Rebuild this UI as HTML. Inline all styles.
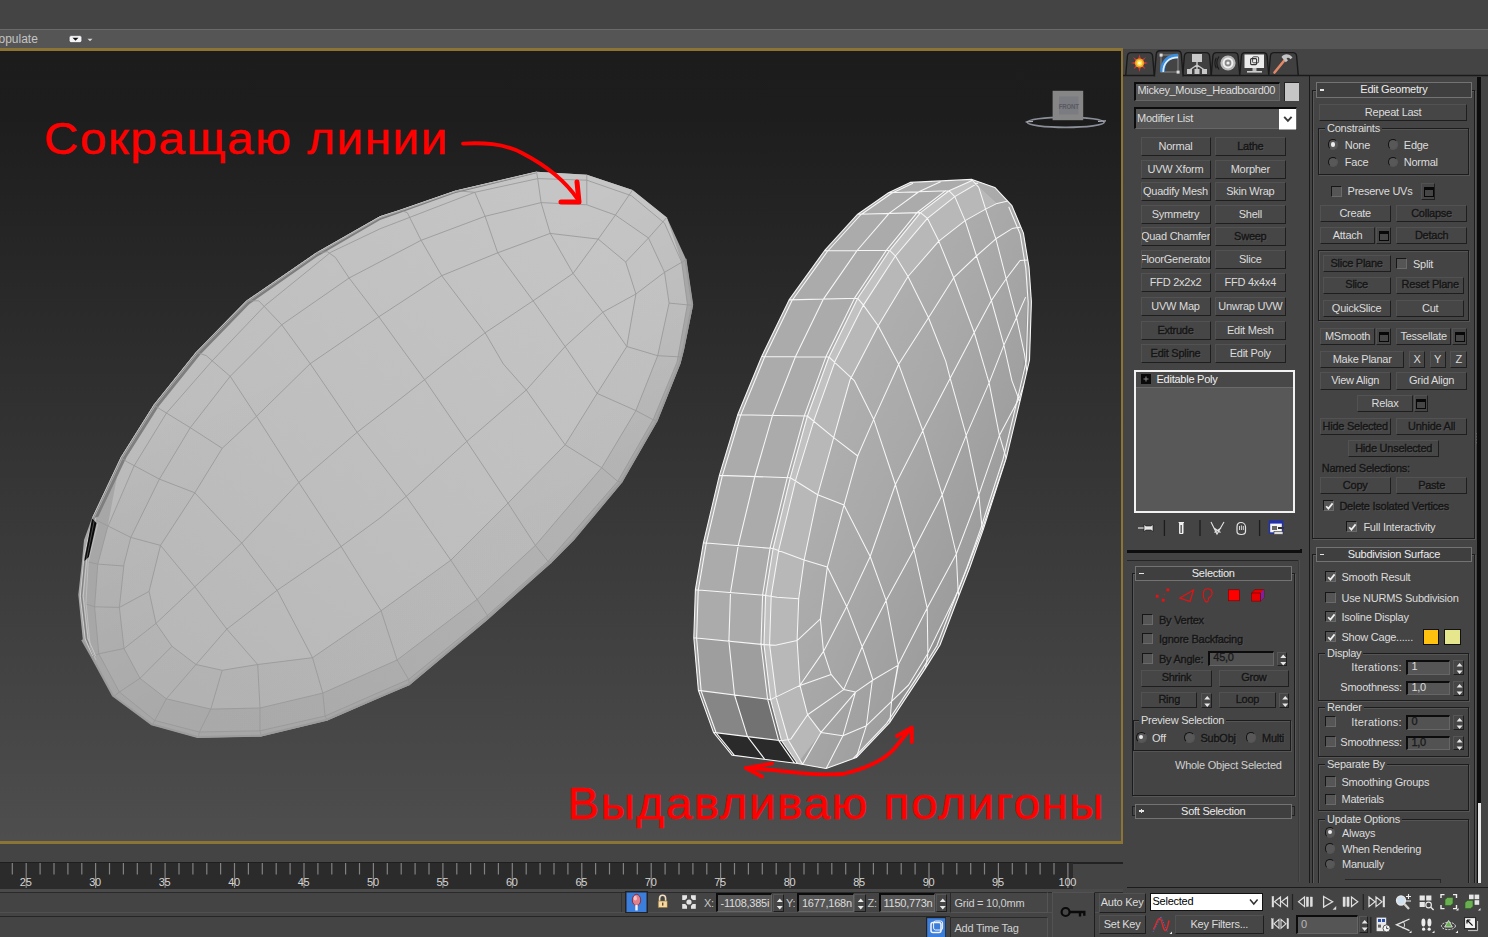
<!DOCTYPE html>
<html><head><meta charset="utf-8"><title>3ds Max</title><style>
html,body{margin:0;padding:0;background:#444;}
body{width:1488px;height:937px;position:relative;overflow:hidden;font-family:"Liberation Sans",sans-serif;font-size:11px;letter-spacing:-0.25px;}
#r{position:absolute;left:0;top:0;width:1488px;height:937px;overflow:hidden;background:#444;}
#r div,#r span,#r svg{position:absolute;box-sizing:border-box;}
#r svg{overflow:visible;}
.t{white-space:nowrap;line-height:14px;height:14px;}
.b{background:#464646;border-top:1px solid #525252;border-left:1px solid #525252;border-bottom:1.4px solid #1e1e1e;border-right:1.4px solid #1e1e1e;text-align:center;white-space:nowrap;}
.c{background:#555;border-top:1.5px solid #161616;border-left:1.5px solid #161616;border-right:1px solid #6a6a6a;border-bottom:1px solid #6a6a6a;}
.r{width:10.4px;height:10.4px;border-radius:6px;background:#585858;border:1.5px solid #121212;border-right-color:#555;border-bottom-color:#555;}
.g{border:1.4px solid #1c1c1c;box-shadow:1px 1px 0 #555, inset 1px 1px 0 #555;}
.f{background:#555;border-top:2px solid #0c0c0c;border-left:2px solid #0c0c0c;border-right:1px solid #666;border-bottom:1px solid #666;color:#dcdcdc;font-size:11px;padding-left:3px;white-space:nowrap;overflow:hidden;}
.sp{background:#464646;border-top:1px solid #565656;border-left:1px solid #565656;border-right:1.3px solid #1e1e1e;border-bottom:1.3px solid #1e1e1e;}
.h{background:#3f3f3f;border:1px solid #737373;color:#ececec;text-align:center;font-size:11px;white-space:nowrap;}
.rb{border:1.4px solid #1c1c1c;box-shadow:1px 1px 0 #585858, inset 1px 1px 0 #585858;}
.pn{border-top:1px solid #2a2a2a;border-left:1px solid #2a2a2a;border-right:1px solid #555;border-bottom:1px solid #555;background:#464646}
.tab{background:#484848;border:1.5px solid #1a1a1a;border-radius:5px 5px 0 0;transform:skewX(4deg);}
</style></head>
<body><div id="r">
<div style="left:0px;top:0px;width:1488px;height:29px;background:#444"></div>
<div style="left:0px;top:29px;width:1488px;height:1px;background:#6a6a6a"></div>
<div style="left:0px;top:30px;width:1488px;height:19px;background:#555"></div>
<span class="t" style="left:-1.5px;top:32.2px;color:#c4c4c4;font-size:12px;letter-spacing:0;">opulate</span>
<svg style="left:66px;top:32px" width="30" height="14" viewBox="0 0 30 14"><rect x="3.2" y="3.6" width="12.6" height="7" rx="2" fill="#f4f4f4" stroke="#3a3a4a" stroke-width="0.6"/><path d="M6.5 5.8 L12.5 5.8 L9.5 8.8 Z" fill="#111"/><path d="M21.5 6.8 L26.5 6.8 L24 9.3 Z" fill="#d8d8d8"/></svg>
<div style="left:0px;top:48px;width:1123px;height:796px;background:#8c7534"></div>
<div style="left:0px;top:50.6px;width:1121px;height:790.7px;background:linear-gradient(#1c1c1c 0%,#1d1d1d 8%,#4e4e4e 100%)"></div>
<div style="left:0px;top:862px;width:1123px;height:2px;background:#222"></div>
<div style="left:0px;top:863px;width:1073px;height:26px;background:#2b2b2b"></div>
<div style="left:0px;top:862px;width:1073px;height:1px;background:#1e1e1e"></div>
<div style="left:0px;top:889px;width:1123px;height:3px;background:#4a4a4a"></div>
<div style="left:0px;top:892px;width:1123px;height:1px;background:#2a2a2a"></div>
<svg style="left:0;top:862px" width="1123" height="28"><rect x="11.7" y="1" width="1.2" height="11.5" fill="#828282"/><rect x="25.6" y="1" width="1.2" height="25" fill="#828282"/><rect x="39.5" y="1" width="1.2" height="11.5" fill="#828282"/><rect x="53.4" y="1" width="1.2" height="11.5" fill="#828282"/><rect x="67.3" y="1" width="1.2" height="11.5" fill="#828282"/><rect x="81.2" y="1" width="1.2" height="11.5" fill="#828282"/><rect x="95.0" y="1" width="1.2" height="25" fill="#828282"/><rect x="108.9" y="1" width="1.2" height="11.5" fill="#828282"/><rect x="122.8" y="1" width="1.2" height="11.5" fill="#828282"/><rect x="136.7" y="1" width="1.2" height="11.5" fill="#828282"/><rect x="150.6" y="1" width="1.2" height="11.5" fill="#828282"/><rect x="164.5" y="1" width="1.2" height="25" fill="#828282"/><rect x="178.4" y="1" width="1.2" height="11.5" fill="#828282"/><rect x="192.3" y="1" width="1.2" height="11.5" fill="#828282"/><rect x="206.2" y="1" width="1.2" height="11.5" fill="#828282"/><rect x="220.0" y="1" width="1.2" height="11.5" fill="#828282"/><rect x="233.9" y="1" width="1.2" height="25" fill="#828282"/><rect x="247.8" y="1" width="1.2" height="11.5" fill="#828282"/><rect x="261.7" y="1" width="1.2" height="11.5" fill="#828282"/><rect x="275.6" y="1" width="1.2" height="11.5" fill="#828282"/><rect x="289.5" y="1" width="1.2" height="11.5" fill="#828282"/><rect x="303.4" y="1" width="1.2" height="25" fill="#828282"/><rect x="317.3" y="1" width="1.2" height="11.5" fill="#828282"/><rect x="331.2" y="1" width="1.2" height="11.5" fill="#828282"/><rect x="345.0" y="1" width="1.2" height="11.5" fill="#828282"/><rect x="358.9" y="1" width="1.2" height="11.5" fill="#828282"/><rect x="372.8" y="1" width="1.2" height="25" fill="#828282"/><rect x="386.7" y="1" width="1.2" height="11.5" fill="#828282"/><rect x="400.6" y="1" width="1.2" height="11.5" fill="#828282"/><rect x="414.5" y="1" width="1.2" height="11.5" fill="#828282"/><rect x="428.4" y="1" width="1.2" height="11.5" fill="#828282"/><rect x="442.3" y="1" width="1.2" height="25" fill="#828282"/><rect x="456.2" y="1" width="1.2" height="11.5" fill="#828282"/><rect x="470.0" y="1" width="1.2" height="11.5" fill="#828282"/><rect x="483.9" y="1" width="1.2" height="11.5" fill="#828282"/><rect x="497.8" y="1" width="1.2" height="11.5" fill="#828282"/><rect x="511.7" y="1" width="1.2" height="25" fill="#828282"/><rect x="525.6" y="1" width="1.2" height="11.5" fill="#828282"/><rect x="539.5" y="1" width="1.2" height="11.5" fill="#828282"/><rect x="553.4" y="1" width="1.2" height="11.5" fill="#828282"/><rect x="567.3" y="1" width="1.2" height="11.5" fill="#828282"/><rect x="581.2" y="1" width="1.2" height="25" fill="#828282"/><rect x="595.0" y="1" width="1.2" height="11.5" fill="#828282"/><rect x="608.9" y="1" width="1.2" height="11.5" fill="#828282"/><rect x="622.8" y="1" width="1.2" height="11.5" fill="#828282"/><rect x="636.7" y="1" width="1.2" height="11.5" fill="#828282"/><rect x="650.6" y="1" width="1.2" height="25" fill="#828282"/><rect x="664.5" y="1" width="1.2" height="11.5" fill="#828282"/><rect x="678.4" y="1" width="1.2" height="11.5" fill="#828282"/><rect x="692.3" y="1" width="1.2" height="11.5" fill="#828282"/><rect x="706.2" y="1" width="1.2" height="11.5" fill="#828282"/><rect x="720.0" y="1" width="1.2" height="25" fill="#828282"/><rect x="733.9" y="1" width="1.2" height="11.5" fill="#828282"/><rect x="747.8" y="1" width="1.2" height="11.5" fill="#828282"/><rect x="761.7" y="1" width="1.2" height="11.5" fill="#828282"/><rect x="775.6" y="1" width="1.2" height="11.5" fill="#828282"/><rect x="789.5" y="1" width="1.2" height="25" fill="#828282"/><rect x="803.4" y="1" width="1.2" height="11.5" fill="#828282"/><rect x="817.3" y="1" width="1.2" height="11.5" fill="#828282"/><rect x="831.2" y="1" width="1.2" height="11.5" fill="#828282"/><rect x="845.1" y="1" width="1.2" height="11.5" fill="#828282"/><rect x="858.9" y="1" width="1.2" height="25" fill="#828282"/><rect x="872.8" y="1" width="1.2" height="11.5" fill="#828282"/><rect x="886.7" y="1" width="1.2" height="11.5" fill="#828282"/><rect x="900.6" y="1" width="1.2" height="11.5" fill="#828282"/><rect x="914.5" y="1" width="1.2" height="11.5" fill="#828282"/><rect x="928.4" y="1" width="1.2" height="25" fill="#828282"/><rect x="942.3" y="1" width="1.2" height="11.5" fill="#828282"/><rect x="956.2" y="1" width="1.2" height="11.5" fill="#828282"/><rect x="970.1" y="1" width="1.2" height="11.5" fill="#828282"/><rect x="983.9" y="1" width="1.2" height="11.5" fill="#828282"/><rect x="997.8" y="1" width="1.2" height="25" fill="#828282"/><rect x="1011.7" y="1" width="1.2" height="11.5" fill="#828282"/><rect x="1025.6" y="1" width="1.2" height="11.5" fill="#828282"/><rect x="1039.5" y="1" width="1.2" height="11.5" fill="#828282"/><rect x="1053.4" y="1" width="1.2" height="11.5" fill="#828282"/><rect x="1067.3" y="1" width="1.2" height="25" fill="#828282"/></svg>
<span class="t" style="left:10.7px;top:874.5px;width:30px;text-align:center;color:#d4d4d4;font-size:11px">25</span>
<span class="t" style="left:80.1px;top:874.5px;width:30px;text-align:center;color:#d4d4d4;font-size:11px">30</span>
<span class="t" style="left:149.6px;top:874.5px;width:30px;text-align:center;color:#d4d4d4;font-size:11px">35</span>
<span class="t" style="left:219.0px;top:874.5px;width:30px;text-align:center;color:#d4d4d4;font-size:11px">40</span>
<span class="t" style="left:288.5px;top:874.5px;width:30px;text-align:center;color:#d4d4d4;font-size:11px">45</span>
<span class="t" style="left:357.9px;top:874.5px;width:30px;text-align:center;color:#d4d4d4;font-size:11px">50</span>
<span class="t" style="left:427.4px;top:874.5px;width:30px;text-align:center;color:#d4d4d4;font-size:11px">55</span>
<span class="t" style="left:496.8px;top:874.5px;width:30px;text-align:center;color:#d4d4d4;font-size:11px">60</span>
<span class="t" style="left:566.3px;top:874.5px;width:30px;text-align:center;color:#d4d4d4;font-size:11px">65</span>
<span class="t" style="left:635.7px;top:874.5px;width:30px;text-align:center;color:#d4d4d4;font-size:11px">70</span>
<span class="t" style="left:705.1px;top:874.5px;width:30px;text-align:center;color:#d4d4d4;font-size:11px">75</span>
<span class="t" style="left:774.6px;top:874.5px;width:30px;text-align:center;color:#d4d4d4;font-size:11px">80</span>
<span class="t" style="left:844.0px;top:874.5px;width:30px;text-align:center;color:#d4d4d4;font-size:11px">85</span>
<span class="t" style="left:913.5px;top:874.5px;width:30px;text-align:center;color:#d4d4d4;font-size:11px">90</span>
<span class="t" style="left:982.9px;top:874.5px;width:30px;text-align:center;color:#d4d4d4;font-size:11px">95</span>
<span class="t" style="left:1052.4px;top:874.5px;width:30px;text-align:center;color:#d4d4d4;font-size:11px">100</span>
<div style="left:0px;top:912px;width:1123px;height:1px;background:#505050"></div>
<div style="left:0px;top:916px;width:950px;height:1px;background:#262626"></div>
<div style="left:621px;top:893px;width:1px;height:19px;background:#333"></div>
<svg style="left:625px;top:891px" width="23" height="22" viewBox="0 0 23 22"><rect x="0" y="0" width="23" height="22" fill="#222"/><rect x="1.5" y="1.5" width="20" height="19.5" fill="#3c7edb"/><ellipse cx="11.5" cy="9" rx="4.2" ry="5.6" fill="#e0808c" stroke="#7a2030" stroke-width="0.8"/><ellipse cx="10.3" cy="7.2" rx="1.6" ry="2.4" fill="#f6c0c8"/><rect x="10.3" y="14" width="2.4" height="5.5" fill="#f4f4f4"/></svg>
<svg style="left:655px;top:893px" width="16" height="18" viewBox="0 0 16 18"><path d="M4.6 8 V5.2 a3 3 0 0 1 6 0 V8" fill="none" stroke="#f0e0c0" stroke-width="1.6"/><rect x="3.2" y="8" width="9" height="6.6" fill="#f4d9a4" stroke="#8a6a30" stroke-width="0.6"/><rect x="7" y="9.6" width="1.4" height="3" fill="#6a4a20"/></svg>
<svg style="left:681px;top:894px" width="16" height="16" viewBox="0 0 16 16"><rect x="1.2" y="1.2" width="13.6" height="13.6" fill="#e4e4e4"/><path d="M6 1 H10 V6 H15 V10 H10 V15 H6 V10 H1 V6 H6 Z" fill="#4a4a4a"/><circle cx="8" cy="8" r="4.2" fill="#4a4a4a"/><circle cx="8" cy="8" r="2.6" fill="#e4e4e4"/></svg>
<span class="t" style="left:704px;top:896.0px;color:#c8c8c8;font-size:11px;">X:</span>
<div class="f" style="left:715.5px;top:892.5px;width:56.5px;height:19.5px;line-height:16.9px;color:#dcdcdc;background:#555;">-1108,385i</div>
<div class="sp" style="left:772.5px;top:893.5px;width:11.5px;height:18.0px;"><svg width="11.5" height="18.0" style="position:absolute;left:0;top:0"><path d="M2.75 7.0 L5.75 3.5 L8.75 7.0 Z M2.75 11.0 L5.75 14.5 L8.75 11.0 Z" fill="#e6e6e6"/></svg></div>
<span class="t" style="left:786px;top:896.0px;color:#c8c8c8;font-size:11px;">Y:</span>
<div class="f" style="left:797px;top:892.5px;width:56.5px;height:19.5px;line-height:16.9px;color:#dcdcdc;background:#555;">1677,168n</div>
<div class="sp" style="left:854px;top:893.5px;width:11.5px;height:18.0px;"><svg width="11.5" height="18.0" style="position:absolute;left:0;top:0"><path d="M2.75 7.0 L5.75 3.5 L8.75 7.0 Z M2.75 11.0 L5.75 14.5 L8.75 11.0 Z" fill="#e6e6e6"/></svg></div>
<span class="t" style="left:867.5px;top:896.0px;color:#c8c8c8;font-size:11px;">Z:</span>
<div class="f" style="left:878.5px;top:892.5px;width:56.5px;height:19.5px;line-height:16.9px;color:#dcdcdc;background:#555;">1150,773n</div>
<div class="sp" style="left:935.5px;top:893.5px;width:11.5px;height:18.0px;"><svg width="11.5" height="18.0" style="position:absolute;left:0;top:0"><path d="M2.75 7.0 L5.75 3.5 L8.75 7.0 Z M2.75 11.0 L5.75 14.5 L8.75 11.0 Z" fill="#e6e6e6"/></svg></div>
<div class="pn" style="left:950px;top:892px;width:97.5px;height:21px;"></div>
<span class="t" style="left:954.5px;top:896.0px;color:#d0d0d0;font-size:11px;">Grid = 10,0mm</span>
<div class="pn" style="left:950px;top:916.5px;width:97.5px;height:21px;"></div>
<span class="t" style="left:954.5px;top:920.5px;color:#d0d0d0;font-size:11px;">Add Time Tag</span>
<svg style="left:926px;top:917px" width="20" height="20" viewBox="0 0 20 20"><rect x="0" y="0" width="20" height="20" fill="#222"/><rect x="1.2" y="1.2" width="18" height="18.8" fill="#3c7edb"/><rect x="5" y="5.6" width="10" height="10" rx="2" fill="none" stroke="#f4f4f4" stroke-width="1.5"/><rect x="7.6" y="4" width="9" height="9" rx="2" fill="none" stroke="#f4f4f4" stroke-width="1"/></svg>
<div class="b" style="left:1052px;top:891.5px;width:43px;height:46px;"></div>
<svg style="left:1058px;top:904px" width="30" height="16" viewBox="0 0 30 16"><circle cx="7.6" cy="8" r="4" fill="none" stroke="#0a0a0a" stroke-width="2.2"/><path d="M11.6 8 H27.5 M22 8 V12.4 M26.3 8 V11.8" stroke="#0a0a0a" stroke-width="2.4" fill="none"/></svg>
<svg style="left:0;top:50px" width="1121" height="792" viewBox="0 50 1121 792"><defs><linearGradient id="lg1" gradientUnits="userSpaceOnUse" x1="560" y1="200" x2="200" y2="700"><stop offset="0" stop-color="#c5c5c5"/><stop offset="0.6" stop-color="#bebebe"/><stop offset="1" stop-color="#b7b7b7"/></linearGradient><linearGradient id="rg1" gradientUnits="userSpaceOnUse" x1="800" y1="400" x2="1030" y2="500"><stop offset="0" stop-color="#b2b2b2"/><stop offset="0.45" stop-color="#a9a9a9"/><stop offset="1" stop-color="#9a9a9a"/></linearGradient><linearGradient id="lz" gradientUnits="userSpaceOnUse" x1="330" y1="330" x2="450" y2="560"><stop offset="0" stop-color="#000" stop-opacity="0"/><stop offset="1" stop-color="#000" stop-opacity="0.075"/></linearGradient></defs><path d="M536.5 171.7 L586.8 174.7 L632.5 190.0 L666.8 217.4 L686.2 259.7 L693.0 305.4 L684.0 350.0 L680.5 363.7 L657.7 420.8 L622.2 482.5 L574.2 540.0 L551.4 562.9 L487.4 620.0 L409.7 685.1 L380.0 697.7 L327.4 720.5 L261.1 736.5 L198.3 737.7 L152.5 725.1 L113.7 696.5 L92.0 656.5 L82.9 640.5 L78.3 594.8 L81.7 564.0 L84.0 540.0 L92.0 518.0 L120.6 457.4 L153.7 404.8 L196.0 352.0 L246.2 300.8 L316.0 252.8 L380.0 216.3 L400.0 209.9 L455.4 190.7 Z" fill="#a7a7a7"/><path d="M120.6 457.4 L153.7 404.8 L196.0 352.0 L246.2 300.8 L316.0 252.8 L380.0 216.3 L400.0 209.9 L455.4 190.7 L536.5 171.7 L586.8 174.7 L632.5 190.0 L666.8 217.4 L681.6 262.0 L687.4 304.3 L677.1 362.0 L653.1 419.7 L617.7 481.4 L548.0 561.4 L487.4 615.4 L408.6 679.4 L325.1 716.0 L260.0 730.8 L199.4 732.0 L154.8 720.5 L119.4 692.0 L98.8 653.8 L94.6 606.8 L97.8 564.1 L107.4 527.8 Z" fill="url(#lg1)"/><path d="M97.8 564.1 L107.4 527.8 L134.0 466.0 L166.5 413.0 L212.0 361.0 L264.9 305.6 L330.5 252.4 L380.0 228.8 L474.8 192.3 L537.7 178.6 L586.8 180.2 L631.4 195.7 L664.5 223.1 L681.6 262.0 L687.4 304.3 L677.1 362.0 L653.1 419.7 L617.7 481.4 L548.0 561.4 L487.4 615.4 L408.6 679.4 L325.1 716.0 L260.0 730.8 L199.4 732.0 L154.8 720.5 L119.4 692.0 L98.8 653.8 L94.6 606.8 Z M124.0 564.1 L130.8 537.4 L159.4 479.1 L190.3 427.7 L230.2 376.3 L281.7 324.8 L349.1 278.0 L421.1 240.3 L485.1 216.3 L541.1 202.6 L586.8 204.8 L615.4 215.1 L648.5 238.0 L664.5 272.3 L669.1 303.1 L657.7 355.7 L635.9 410.6 L601.7 467.7 L535.4 545.4 L477.1 599.4 L397.1 660.0 L322.8 693.1 L260.0 708.0 L210.8 709.1 L166.3 698.8 L140.0 678.3 L124.0 648.5 L119.4 607.4 Z" fill="url(#lz)" fill-rule="evenodd"/><path d="M124.0 564.1 L130.8 537.4 L159.4 479.1 L190.3 427.7 L230.2 376.3 L281.7 324.8 L349.1 278.0 L421.1 240.3 L485.1 216.3 L541.1 202.6 L586.8 204.8 L615.4 215.1 L648.5 238.0 L664.5 272.3 L669.1 303.1 L657.7 355.7 L635.9 410.6 L601.7 467.7 L535.4 545.4 L477.1 599.4 L397.1 660.0 L322.8 693.1 L260.0 708.0 L210.8 709.1 L166.3 698.8 L140.0 678.3 L124.0 648.5 L119.4 607.4 Z M160.5 545.4 L194.8 492.8 L222.2 448.3 L256.5 416.3 L310.2 363.7 L378.8 316.8 L441.7 275.7 L497.7 252.8 L550.2 233.4 L598.2 239.1 L625.7 262.0 L635.9 294.0 L626.8 346.5 L597.1 393.4 L565.1 444.8 L508.0 503.1 L450.8 560.2 L381.0 610.8 L312.5 657.7 L257.7 664.5 L222.2 670.3 L196.0 664.5 L172.0 646.3 L156.0 623.4 L149.1 591.4 Z" fill="url(#lz)" fill-opacity="0.4" fill-rule="evenodd"/><path d="M92.0 518.0 L120.6 457.4 L153.7 404.8 L196.0 352.0 L246.2 300.8 L316.0 252.8 L380.0 216.3 L400.0 209.9 L455.4 190.7 L536.5 171.7 L535.5 173.6 L454.7 193.3 L399.8 213.0 L380.1 219.9 L317.3 256.6 L249.2 304.2 L200.4 354.4 L159.0 406.0 L126.5 457.3 L98.3 516.7 Z" fill="#7e7e7e"/><path d="M92.5 517.9 L121.1 457.4 L154.1 404.9 L196.4 352.2 L246.5 301.1 L316.1 253.2 L380.0 216.7 L400.0 210.2 L455.3 191.0 L536.4 172.0" fill="none" stroke="#c6c6c6" stroke-width="1"/><path d="M94.2 517.5 L122.7 457.4 L155.6 405.2 L197.6 352.9 L247.3 302.0 L316.5 254.2 L380.0 217.7 L399.9 211.1 L455.1 191.7 L536.1 172.5" fill="none" stroke="#b4b4b4" stroke-width="0.8"/><path d="M97.8 564.1 L107.4 527.8 L134.0 466.0 L166.5 413.0 L212.0 361.0 L264.9 305.6 L330.5 252.4 L380.0 228.8 L474.8 192.3 L537.7 178.6 L586.8 180.2 L631.4 195.7 L664.5 223.1 L681.6 262.0 L687.4 304.3 L677.1 362.0 L653.1 419.7 L617.7 481.4 L548.0 561.4 L487.4 615.4 L408.6 679.4 L325.1 716.0 L260.0 730.8 L199.4 732.0 L154.8 720.5 L119.4 692.0 L98.8 653.8 L94.6 606.8 Z M124.0 564.1 L130.8 537.4 L159.4 479.1 L190.3 427.7 L230.2 376.3 L281.7 324.8 L349.1 278.0 L421.1 240.3 L485.1 216.3 L541.1 202.6 L586.8 204.8 L615.4 215.1 L648.5 238.0 L664.5 272.3 L669.1 303.1 L657.7 355.7 L635.9 410.6 L601.7 467.7 L535.4 545.4 L477.1 599.4 L397.1 660.0 L322.8 693.1 L260.0 708.0 L210.8 709.1 L166.3 698.8 L140.0 678.3 L124.0 648.5 L119.4 607.4 Z M160.5 545.4 L194.8 492.8 L222.2 448.3 L256.5 416.3 L310.2 363.7 L378.8 316.8 L441.7 275.7 L497.7 252.8 L550.2 233.4 L598.2 239.1 L625.7 262.0 L635.9 294.0 L626.8 346.5 L597.1 393.4 L565.1 444.8 L508.0 503.1 L450.8 560.2 L381.0 610.8 L312.5 657.7 L257.7 664.5 L222.2 670.3 L196.0 664.5 L172.0 646.3 L156.0 623.4 L149.1 591.4 Z M536.5 171.7 L537.7 178.6 L541.1 202.6 L550.2 233.4 L573.1 273.4 L602.8 312.2 L626.8 346.5 L657.7 355.7 L682.0 357.0 M455.4 190.7 L474.8 192.3 L485.1 216.3 L497.7 252.8 L533.1 300.8 L565.1 346.5 L597.1 393.4 L635.9 410.6 L653.1 419.7 L657.7 420.8 M400.0 209.9 L407.4 212.8 L421.1 240.3 L441.7 275.7 L485.1 332.8 L503.4 364.1 L526.3 390.0 L565.1 444.8 L601.7 467.7 L617.7 481.4 L622.2 482.5 M316.0 252.8 L327.4 251.7 L335.4 257.4 L349.1 278.0 L378.8 316.8 L402.9 350.0 L424.6 379.7 L466.8 441.4 L508.0 503.1 L535.4 545.4 L548.0 561.4 L551.4 562.9 M246.2 300.8 L258.8 300.8 L281.7 324.8 L310.2 363.7 L357.1 432.3 L380.0 462.0 L406.3 496.3 L450.8 560.2 L477.1 599.4 L487.4 615.4 L487.4 620.0 M196.0 352.0 L206.3 355.7 L230.2 376.3 L256.5 416.3 L298.8 482.5 L341.1 546.5 L381.1 610.8 L397.1 660.0 L408.6 679.4 L409.7 685.1 M153.7 404.8 L160.5 409.4 L190.3 427.7 L222.2 448.3 M120.6 457.4 L127.4 462.0 L159.4 479.1 L194.8 492.8 L241.7 543.1 L277.1 590.3 L312.5 657.7 L322.8 693.1 L325.1 716.0 L327.4 720.5 M92.0 518.0 L98.8 521.4 L130.8 537.4 L160.5 545.4 L194.8 586.8 L226.8 629.1 L257.7 664.5 L260.0 708.0 L260.0 730.8 L261.1 736.5 M632.5 190.0 L615.4 215.1 L598.2 239.1 L573.1 273.4 L533.1 300.8 L485.1 332.8 L444.0 364.1 L424.6 379.7 L400.0 399.1 L357.1 432.3 L298.8 482.5 L241.7 543.1 L194.8 586.8 L156.0 623.4 L124.0 648.5 L98.8 653.8 L92.0 656.5 M686.2 259.7 L664.5 272.3 L635.9 294.0 L602.8 312.2 L565.1 346.5 L526.3 390.0 L466.8 441.4 L406.3 496.3 L380.0 518.0 L341.1 546.5 L277.1 590.3 L226.8 629.1 L196.0 664.5 L166.3 698.8 L154.8 720.5 L152.5 725.1 M586.8 174.7 L586.8 204.8 M666.8 217.4 L648.5 238.0 L625.7 262.0 M693.0 305.4 L669.1 303.1 M88.2 562.0 L97.8 564.1 L124.0 566.0 M86.0 604.0 L94.6 606.8 L119.4 607.4 L149.1 591.4 M113.7 696.5 L119.4 692.0 L140.0 678.3 L172.0 646.3 M198.3 737.7 L199.4 732.0 L210.8 709.1 L222.2 670.3" fill="none" stroke="#989898" stroke-width="0.85" stroke-linejoin="round"/><path d="M92.7 518.2 L84.1 555.6 L80.3 596.2 L85.2 638.9 L92.7 656.0" fill="none" stroke="#d4d4d4" stroke-width="0.8"/><path d="M94.0 518.2 L85.4 555.6 L81.6 596.2 L86.5 638.9 L94.0 656.0" fill="none" stroke="#808080" stroke-width="1.2"/><path d="M95.6 518.2 L87.0 555.6 L83.2 596.2 L88.1 638.9 L95.6 656.0" fill="none" stroke="#cfcfcf" stroke-width="0.8"/><path d="M97.8 523.5 L88.2 562.0 L86.0 602.6 L90.3 647.4 L96.0 660.0" fill="none" stroke="#c4c4c4" stroke-width="0.8"/><path d="M685.4 258.9 L692.2 304.6 L683.2 349.2 L679.7 362.9 L656.9 420.0 L621.4 481.7 L573.4 539.2 L550.6 562.1 L486.6 619.2 L408.9 684.3 L379.2 696.9 L326.6 719.7 L260.3 735.7 L197.5 736.9 L151.7 724.3 L112.9 695.7 L91.2 655.7 L82.1 639.7" fill="none" stroke="#9c9c9c" stroke-width="2"/><path d="M92 518.5 L96.5 523 L88.8 557 L84.3 561 Z" fill="#0a0a0a"/><path d="M94.2 520.6 L86.5 559" stroke="#777" stroke-width="0.6"/><path d="M972.0 179.4 L910.2 182.4 L888.5 192.7 L857.7 214.2 L824.5 250.7 L789.1 299.9 L761.7 356.5 L737.7 414.8 L719.4 475.4 L703.4 542.8 L695.4 589.7 L693.8 637.7 L698.4 690.4 L713.5 732.4 L732.0 755.1 L797.5 763.5 L826.1 768.5 L856.3 757.6 L889.9 722.3 L925.2 668.6 L940.0 645.0 L959.4 594.3 L970.0 567.0 L983.4 529.1 L1006.2 458.3 L1020.0 401.0 L1029.5 360.0 L1031.4 301.7 L1029.0 267.4 L1023.4 233.1 L1011.9 205.7 L994.8 187.4 L972.0 179.4 Z" fill="#ababab"/><clipPath id="fc"><path d="M972.0 180.5 L949.0 190.8 L920.5 212.6 L889.7 250.3 L857.7 298.3 L829.0 357.0 L807.4 416.0 L790.3 477.7 L773.1 548.5 L765.6 595.4 L764.0 644.6 L770.6 699.6 L781.6 740.8 L797.5 763.5 L826.1 768.5 L856.3 757.6 L889.9 722.3 L925.2 668.6 L940.0 645.0 L959.4 594.3 L970.0 567.0 L983.4 529.1 L1006.2 458.3 L1020.0 401.0 L1029.5 360.0 L1031.4 301.7 L1029.0 267.4 L1023.4 233.1 L1011.9 205.7 L994.8 187.4 L972.0 179.4 Z"/></clipPath><path d="M972.0 180.5 L949.0 190.8 L920.5 212.6 L889.7 250.3 L857.7 298.3 L829.0 357.0 L807.4 416.0 L790.3 477.7 L773.1 548.5 L765.6 595.4 L764.0 644.6 L770.6 699.6 L781.6 740.8 L797.5 763.5 L826.1 768.5 L856.3 757.6 L889.9 722.3 L925.2 668.6 L940.0 645.0 L959.4 594.3 L970.0 567.0 L983.4 529.1 L1006.2 458.3 L1020.0 401.0 L1029.5 360.0 L1031.4 301.7 L1029.0 267.4 L1023.4 233.1 L1011.9 205.7 L994.8 187.4 L972.0 179.4 Z" fill="url(#rg1)"/><path d="M972.0 180.5 L949.0 190.8 L920.5 212.6 L889.7 250.3 L857.7 298.3 L829.0 357.0 L807.4 416.0 L790.3 477.7 L773.1 548.5 L765.6 595.4 L764.0 644.6 L770.6 699.6 L781.6 740.8 L797.5 763.5 L821.0 732.4 L807.6 714.8 L800.0 685.4 L797.1 640.6 L798.7 598.8 L804.1 560.1 L817.7 494.8 L833.7 437.7 L850.0 380.0 L878.2 325.7 L908.0 276.5 L938.8 241.1 L965.1 220.6 L985.6 209.1 L997.0 203.4 Z" fill="#b8b8b8" clip-path="url(#fc)"/><path d="M972.0 180.5 L949.0 190.8 L920.5 212.6 L889.7 250.3 L857.7 298.3 L829.0 357.0 L807.4 416.0 L790.3 477.7 L773.1 548.5 L765.6 595.4 L764.0 644.6 L770.6 699.6 L781.6 740.8 L797.5 763.5 L802.6 764.3 L788.2 740.0 L776.4 698.3 L769.6 644.6 L771.2 595.4 L778.8 549.7 L796.0 478.8 L814.3 419.4 L835.4 360.5 L863.4 305.1 L895.4 256.0 L927.4 218.3 L954.8 196.6 L978.0 183.0 Z" fill="#c2c2c2" clip-path="url(#fc)"/><path d="M1029.0 267.4 L1031.4 301.7 L1029.5 360.0 L1020.0 401.0 L1006.2 458.3 L983.4 529.1 L970.0 567.0 L959.4 594.3 L940.0 645.0 L925.2 668.6 L889.9 722.3 L891.6 701.3 L908.6 685.0 L927.2 654.5 L958.1 591.1 L982.2 529.1 L1006.2 458.3 L1018.8 398.9 L1024.5 354.2 Z" fill="#000" fill-opacity="0.07"/><path d="M693.8 637.7 L764.0 644.6 L770.6 699.6 L698.4 690.4 Z" fill="#9e9e9e"/><path d="M698.4 690.4 L734.5 695.0 L747.5 736.6 L713.5 732.4 Z" fill="#868686"/><path d="M734.5 695.0 L770.6 699.6 L781.6 740.8 L747.5 736.6 Z" fill="#727272"/><path d="M713.5 732.4 L781.6 740.8 L797.5 763.5 L732.0 755.1 Z" fill="#2a2a2a"/><path d="M972.0 179.4 L910.2 182.4 L888.5 192.7 L857.7 214.2 L824.5 250.7 L789.1 299.9 L761.7 356.5 L737.7 414.8 L719.4 475.4 L703.4 542.8 L695.4 589.7 L693.8 637.7 L698.4 690.4 L713.5 732.4 L732.0 755.1 L797.5 763.5 L826.1 768.5 L856.3 757.6 L889.9 722.3 L925.2 668.6 L940.0 645.0 L959.4 594.3 L970.0 567.0 L983.4 529.1 L1006.2 458.3 L1020.0 401.0 L1029.5 360.0 L1031.4 301.7 L1029.0 267.4 L1023.4 233.1 L1011.9 205.7 L994.8 187.4 L972.0 179.4 Z M972.0 180.5 L949.0 190.8 L920.5 212.6 L889.7 250.3 L857.7 298.3 L829.0 357.0 L807.4 416.0 L790.3 477.7 L773.1 548.5 L765.6 595.4 L764.0 644.6 L770.6 699.6 L781.6 740.8 L797.5 763.5 M913.0 183.2 L891.3 193.5 L860.5 215.0 L827.3 251.5 L791.9 300.7 L764.5 357.3 L740.5 415.6 L722.2 476.2 L706.2 543.6 L698.2 590.5 L696.6 638.5 L701.2 691.2 L716.3 733.2 L734.8 755.9 M946.0 190.4 L917.5 212.2 L886.7 249.9 L854.7 297.9 L826.0 356.6 L804.4 415.6 L787.3 477.3 L770.1 548.1 L762.6 595.0 L761.0 644.2 L767.6 699.2 L778.6 740.4 L794.5 763.1 M941.1 181.4 L918.8 191.8 L889.1 213.4 L857.1 250.5 L823.4 299.1 L795.4 356.8 L772.5 415.4 L754.8 476.5 L738.2 545.6 L730.5 592.5 L728.9 641.2 L734.5 695.0 L747.5 736.6 L764.8 759.3 M888.5 192.7 L949.0 190.8 M857.7 214.2 L920.5 212.6 M824.5 250.7 L889.7 250.3 M789.1 299.9 L857.7 298.3 M761.7 356.5 L829.0 357.0 M737.7 414.8 L807.4 416.0 M719.4 475.4 L790.3 477.7 M703.4 542.8 L773.1 548.5 M695.4 589.7 L765.6 595.4 M693.8 637.7 L764.0 644.6 M698.4 690.4 L770.6 699.6 M713.5 732.4 L781.6 740.8 M732.0 755.1 L797.5 763.5 M1008.7 206.7 L1020.2 234.1 L1025.8 268.4 L1028.2 302.7 L1026.3 361.0 L1016.8 402.0 L1003.0 459.3 L980.2 530.1 L966.8 568.0 L956.2 595.3 L936.8 646.0 L922.0 669.6 L886.7 723.3 L853.1 758.6" fill="none" stroke="#f6f6f6" stroke-width="1.1" stroke-linejoin="round"/><path d="M978.0 183.0 L954.8 196.6 L927.4 218.3 L895.4 256.0 L863.4 305.1 L835.4 360.5 L814.3 419.4 L796.0 478.8 L778.8 549.7 L771.2 595.4 L769.6 644.6 L776.4 698.3 L788.2 740.0 L802.6 764.3 M997.0 203.4 L985.6 209.1 L965.1 220.6 L938.8 241.1 L908.0 276.5 L878.2 325.7 L850.0 380.0 L833.7 437.7 L817.7 494.8 L804.1 560.1 L798.7 598.8 L797.1 640.6 L800.0 685.4 L807.6 714.8 L821.0 732.4 L842.9 735.8 L866.4 725.7 L891.6 701.3 L898.3 665.2 L886.1 600.4 L870.2 556.5 L844.0 505.1 M1012.0 228.6 L995.9 238.8 L976.5 256.0 L953.7 277.7 L928.5 317.7 L898.8 364.0 L873.7 419.4 L857.7 456.0 L844.0 505.1 L827.3 567.1 L820.4 618.9 L823.5 651.4 L831.1 674.4 L843.7 689.6 L855.5 692.1 L873.0 680.0 L862.2 646.8 L846.7 606.6 L827.3 567.1 M1020.0 260.5 L1006.2 278.8 L991.4 300.5 L974.2 332.5 L950.2 378.3 L922.8 430.8 L895.4 484.5 L870.2 556.5 L846.7 606.6 L823.5 651.4 L800.2 685.0 M1025.6 297.1 L1016.5 317.7 L1003.9 345.1 L989.1 382.9 L966.2 435.4 L942.2 494.8 L914.0 549.5 L886.1 600.4 L862.2 646.8 L843.7 689.6 M1024.5 382.9 L1018.8 398.9 L999.4 435.4 L978.8 494.8 L956.3 554.0 L927.2 608.1 L897.8 665.4 L873.0 680.0 M1006.2 458.3 L982.2 529.1 L958.1 591.1 L927.2 654.5 L908.6 685.0 L891.6 701.3 M978.8 187.4 L985.6 209.1 L995.9 238.8 L1006.2 278.8 L1016.5 317.7 L1024.5 354.2 L1027.0 372.0 M949.1 190.9 L954.8 196.6 L965.1 220.6 L976.5 256.0 L991.4 300.5 L1003.9 345.1 L1011.9 380.6 L1018.8 398.9 L1020.0 401.0 M920.5 212.6 L927.4 218.3 L938.8 241.1 L953.7 277.7 L974.2 332.5 L989.1 382.9 L999.4 435.4 L1006.2 458.3 M889.7 250.3 L895.4 256.0 L908.0 276.5 L928.5 317.7 L945.7 361.1 L950.2 378.3 L966.2 435.4 L978.8 494.8 L982.2 529.1 L983.4 529.1 M857.7 298.3 L863.4 305.1 L878.2 325.7 L898.8 364.6 L922.8 430.8 L942.2 494.8 L956.3 554.0 L958.1 591.1 L959.7 598.8 M829.0 357.0 L837.1 364.6 L854.3 380.6 L873.7 419.4 L895.4 484.5 L914.0 549.5 L927.2 608.1 L927.9 654.5 L924.8 671.6 M807.4 416.0 L833.7 437.7 L857.7 456.0 M790.3 477.7 L817.7 494.8 L844.0 505.1 M773.1 548.5 L804.1 560.1 L827.3 567.1 M765.6 595.4 L777.0 597.3 L798.7 598.8 M764.0 644.6 L775.5 645.2 L797.1 640.6 L820.4 618.9 M770.6 699.6 L800.0 685.4 L831.1 674.4 M781.6 740.8 L790.8 739.1 L807.6 714.8 L843.7 689.6 M802.6 764.3 L821.0 732.4 L855.5 692.1 M826.1 768.5 L842.9 735.8 L855.5 692.1 M856.3 757.6 L866.4 725.7 L872.3 680.3 M889.9 722.3 L891.6 701.3 L897.8 665.4 M972.0 180.0 L978.8 187.4 M997.0 203.4 L1008.0 201.0 M1012.0 228.6 L1021.0 227.0 M1020.0 260.5 L1028.0 260.0" fill="none" stroke="#f6f6f6" stroke-width="1.05" stroke-linejoin="round" clip-path="url(#fc)"/><ellipse cx="1065.7" cy="122.3" rx="38.5" ry="5" fill="#1b1b1b" stroke="#8a8e98" stroke-width="1.7"/><path d="M1025.5 122 L1033 121.3 M1098 121.3 L1106 120.8" stroke="#aeb0b8" stroke-width="1.2"/><rect x="1052.6" y="90.8" width="30.6" height="29.4" fill="#868686"/><rect x="1059" y="96.4" width="19.4" height="18" fill="#7b7c81"/><text x="1068.7" y="108.6" font-size="7.4" font-weight="bold" fill="#585962" text-anchor="middle" font-family="Liberation Sans" textLength="20" lengthAdjust="spacingAndGlyphs">FRONT</text><text transform="translate(44,0) scale(1.09,1)" x="0" y="153.6" font-size="43.6" fill="#ff0000" stroke="#ff0000" stroke-width="0.45" textLength="369.7" lengthAdjust="spacing" font-family="Liberation Sans">Сокращаю линии</text><text transform="translate(567.5,0) scale(1.09,1)" x="0" y="818.8" font-size="43.6" fill="#ff0000" stroke="#ff0000" stroke-width="0.45" textLength="491.7" lengthAdjust="spacing" font-family="Liberation Sans">Выдавливаю полигоны</text><path d="M463 143.6 C482 142.6 503 143 522 153 C547 166 566 182 577.5 199" fill="none" stroke="#ff0000" stroke-width="3.8" stroke-linecap="round"/><path d="M561 202 L579 202 L577 182" fill="none" stroke="#ff0000" stroke-width="5" stroke-linecap="round" stroke-linejoin="round"/><path d="M746 768 L774 770.2 C790 772.5 825 775.5 843 774 C860 770 882 762 894 749 L911 728" fill="none" stroke="#ff0000" stroke-width="3.8" stroke-linecap="round" stroke-linejoin="round"/><path d="M897 736 L911.8 727.6 L911.8 742" fill="none" stroke="#ff0000" stroke-width="3.8" stroke-linecap="round" stroke-linejoin="round"/><path d="M772 763.5 L746 768 L762 776.5" fill="none" stroke="#ff0000" stroke-width="3.8" stroke-linecap="round" stroke-linejoin="round"/></svg>
<svg style="left:1120px;top:48px" width="185" height="30" viewBox="1120 48 185 30"><path d="M1125.7 75.6 L1127.4 56 Q1127.8 52.6 1131 52.6 L1149 52.6 Q1152.2 52.6 1152.6 56 L1154.3 75.6" fill="#404040" stroke="#1a1a1a" stroke-width="1.4"/><path d="M1182.7 75.6 L1184.4 56 Q1184.8 52.6 1188 52.6 L1206 52.6 Q1209.2 52.6 1209.6 56 L1211.3 75.6" fill="#404040" stroke="#1a1a1a" stroke-width="1.4"/><path d="M1211.2 75.6 L1212.9 56 Q1213.3 52.6 1216.5 52.6 L1234.5 52.6 Q1237.7 52.6 1238.1 56 L1239.8 75.6" fill="#404040" stroke="#1a1a1a" stroke-width="1.4"/><path d="M1239.7 75.6 L1241.4 56 Q1241.8 52.6 1245 52.6 L1263.5 52.6 Q1266.7 52.6 1267.1 56 L1268.8 75.6" fill="#404040" stroke="#1a1a1a" stroke-width="1.4"/><path d="M1268.7 75.6 L1270.4 56 Q1270.8 52.6 1274 52.6 L1293 52.6 Q1296.2 52.6 1296.6 56 L1298.3 75.6" fill="#404040" stroke="#1a1a1a" stroke-width="1.4"/><path d="M1123 75.6 H1155.4 M1182 75.6 H1488" stroke="#1a1a1a" stroke-width="1.5" fill="none"/><path d="M1154.4 76.4 L1156.2 54.4 Q1156.6 50.8 1160 50.8 L1177.5 50.8 Q1180.9 50.8 1181.3 54.4 L1183.1 76.4" fill="#444" stroke="#1a1a1a" stroke-width="1.4"/></svg>
<svg style="left:1126px;top:50px;z-index:3" width="175" height="27" viewBox="1126 50 175 27"><g transform="translate(1139.5,63)"><path d="M0 -8.5 L1.8 -3 L6.5 -6 L3.4 -1.4 L8.5 0 L3.4 1.6 L6 6.2 L1.6 3.2 L0 9 L-1.6 3.2 L-6 6.2 L-3.4 1.6 L-8.5 0 L-3.4 -1.4 L-6.5 -6 L-1.8 -3 Z" fill="#d03838"/><circle r="4.6" fill="#f0a020"/><circle r="3" fill="#ffe040"/><circle r="1.5" fill="#fff8d0"/></g><g transform="translate(1156,51)"><rect x="5" y="4" width="17" height="17" fill="none" stroke="#8a8a8a" stroke-width="1"/><path d="M6.5 21 C6.5 11 12 5 22 5" fill="none" stroke="#3a8ee0" stroke-width="4.6"/><path d="M7.2 21 C7.2 12 12.6 6.4 22 6.4" fill="none" stroke="#dfeefc" stroke-width="1.6"/><rect x="3.6" y="2.6" width="3" height="3" fill="#ddd"/><rect x="20.6" y="19.6" width="3" height="3" fill="#ddd"/></g><g transform="translate(1183,51)"><rect x="9" y="3" width="10" height="8" fill="#c8c8c8"/><path d="M14 11 V15 M14 14 L6.5 19 M14 14 L21.5 19 M14 14 V19" stroke="#c8c8c8" stroke-width="1.4" fill="none"/><rect x="4" y="18" width="5" height="5" fill="#c8c8c8"/><rect x="11.5" y="18" width="5" height="5" fill="#c8c8c8"/><rect x="19" y="18" width="5" height="5" fill="#c8c8c8"/></g><g transform="translate(1211.5,51)"><circle cx="16.5" cy="12" r="7.6" fill="#b8b8b8"/><circle cx="16.5" cy="12" r="5.4" fill="#f0f0f0"/><circle cx="16.5" cy="12" r="3.4" fill="#8a8a8a"/><circle cx="16.5" cy="12" r="1.6" fill="#eee"/><path d="M7.5 5.5 C4.8 9.5 4.8 14.5 7.5 18.5 M4.8 6.8 C3 10.2 3 13.8 4.8 17.2" stroke="#1c1c1c" stroke-width="1.2" fill="none"/></g><g transform="translate(1240,51)"><rect x="4.5" y="3.5" width="19.5" height="13.5" fill="#ececec"/><rect x="12.5" y="17" width="4" height="3" fill="#bbb"/><rect x="7" y="20" width="15" height="1.6" fill="#ccc"/><rect x="10.6" y="7.6" width="6" height="6" rx="1" fill="none" stroke="#333" stroke-width="1.1"/><rect x="12.6" y="5.8" width="6" height="6" rx="1" fill="none" stroke="#333" stroke-width="0.9"/></g><g transform="translate(1269,51)"><path d="M5.5 21.5 L16.5 8" stroke="#e08868" stroke-width="2.6" stroke-linecap="round"/><path d="M12.5 6 C15 2.5 20 2.2 23.5 6.5 L21.5 8.2 C20 6.6 18.6 6.4 17.4 7.4 L19 9.2 L16.8 11.2 Z" fill="#c4c4c4"/></g></svg>
<div class="f" style="left:1134px;top:81.5px;width:145.5px;height:19px;line-height:13.6px;padding-left:1.5px;letter-spacing:-0.36px">Mickey_Mouse_Headboard00</div>
<div style="left:1284px;top:82px;width:14.5px;height:18.5px;background:#c6c6c6;border-top:1px solid #222;border-left:1px solid #222;box-sizing:border-box"></div>
<div class="f" style="left:1134px;top:106.5px;width:162.5px;height:22.5px;line-height:18.4px;padding-left:1px">Modifier List</div>
<svg style="left:1279px;top:108.5px" width="17" height="20.5"><rect width="17" height="20.5" fill="#fff"/><path d="M5.2 7.8 L8.9 11.8 L12.6 7.8" stroke="#3a3a3a" stroke-width="1.9" fill="none"/></svg>
<div class="b" style="left:1140.5px;top:137.1px;width:70.0px;height:19.0px;line-height:16.0px;color:#dcdcdc;font-size:11px;overflow:hidden;"><span style="position:absolute;left:50%;top:0;transform:translateX(-50%);white-space:nowrap">Normal</span></div>
<div class="b" style="left:1214.8px;top:137.1px;width:71.0px;height:19.0px;line-height:16.0px;color:#161616;font-size:11px;text-shadow:1px 1px 0 #525252;-webkit-text-stroke:0.35px #141414;"><span style="position:absolute;left:50%;top:0;transform:translateX(-50%);white-space:nowrap">Lathe</span></div>
<div class="b" style="left:1140.5px;top:159.8px;width:70.0px;height:19.0px;line-height:16.0px;color:#dcdcdc;font-size:11px;overflow:hidden;"><span style="position:absolute;left:50%;top:0;transform:translateX(-50%);white-space:nowrap">UVW Xform</span></div>
<div class="b" style="left:1214.8px;top:159.8px;width:71.0px;height:19.0px;line-height:16.0px;color:#dcdcdc;font-size:11px;"><span style="position:absolute;left:50%;top:0;transform:translateX(-50%);white-space:nowrap">Morpher</span></div>
<div class="b" style="left:1140.5px;top:182.2px;width:70.0px;height:19.0px;line-height:16.0px;color:#dcdcdc;font-size:11px;overflow:hidden;"><span style="position:absolute;left:50%;top:0;transform:translateX(-50%);white-space:nowrap">Quadify Mesh</span></div>
<div class="b" style="left:1214.8px;top:182.2px;width:71.0px;height:19.0px;line-height:16.0px;color:#dcdcdc;font-size:11px;"><span style="position:absolute;left:50%;top:0;transform:translateX(-50%);white-space:nowrap">Skin Wrap</span></div>
<div class="b" style="left:1140.5px;top:204.6px;width:70.0px;height:19.0px;line-height:16.0px;color:#dcdcdc;font-size:11px;overflow:hidden;"><span style="position:absolute;left:50%;top:0;transform:translateX(-50%);white-space:nowrap">Symmetry</span></div>
<div class="b" style="left:1214.8px;top:204.6px;width:71.0px;height:19.0px;line-height:16.0px;color:#dcdcdc;font-size:11px;"><span style="position:absolute;left:50%;top:0;transform:translateX(-50%);white-space:nowrap">Shell</span></div>
<div class="b" style="left:1140.5px;top:227.4px;width:70.0px;height:19.0px;line-height:16.0px;color:#dcdcdc;font-size:11px;overflow:hidden;"><span style="position:absolute;left:50%;top:0;transform:translateX(-50%);white-space:nowrap">Quad Chamfer</span></div>
<div class="b" style="left:1214.8px;top:227.4px;width:71.0px;height:19.0px;line-height:16.0px;color:#161616;font-size:11px;text-shadow:1px 1px 0 #525252;-webkit-text-stroke:0.35px #141414;"><span style="position:absolute;left:50%;top:0;transform:translateX(-50%);white-space:nowrap">Sweep</span></div>
<div class="b" style="left:1140.5px;top:250.0px;width:70.0px;height:19.0px;line-height:16.0px;color:#dcdcdc;font-size:11px;overflow:hidden;"><span style="position:absolute;left:50%;top:0;transform:translateX(-50%);white-space:nowrap">FloorGenerator</span></div>
<div class="b" style="left:1214.8px;top:250.0px;width:71.0px;height:19.0px;line-height:16.0px;color:#dcdcdc;font-size:11px;"><span style="position:absolute;left:50%;top:0;transform:translateX(-50%);white-space:nowrap">Slice</span></div>
<div class="b" style="left:1140.5px;top:272.6px;width:70.0px;height:19.0px;line-height:16.0px;color:#dcdcdc;font-size:11px;overflow:hidden;"><span style="position:absolute;left:50%;top:0;transform:translateX(-50%);white-space:nowrap">FFD 2x2x2</span></div>
<div class="b" style="left:1214.8px;top:272.6px;width:71.0px;height:19.0px;line-height:16.0px;color:#dcdcdc;font-size:11px;"><span style="position:absolute;left:50%;top:0;transform:translateX(-50%);white-space:nowrap">FFD 4x4x4</span></div>
<div class="b" style="left:1140.5px;top:297.2px;width:70.0px;height:19.0px;line-height:16.0px;color:#dcdcdc;font-size:11px;overflow:hidden;"><span style="position:absolute;left:50%;top:0;transform:translateX(-50%);white-space:nowrap">UVW Map</span></div>
<div class="b" style="left:1214.8px;top:297.2px;width:71.0px;height:19.0px;line-height:16.0px;color:#dcdcdc;font-size:11px;"><span style="position:absolute;left:50%;top:0;transform:translateX(-50%);white-space:nowrap">Unwrap UVW</span></div>
<div class="b" style="left:1140.5px;top:321.0px;width:70.0px;height:19.0px;line-height:16.0px;color:#161616;font-size:11px;text-shadow:1px 1px 0 #525252;-webkit-text-stroke:0.35px #141414;overflow:hidden;"><span style="position:absolute;left:50%;top:0;transform:translateX(-50%);white-space:nowrap">Extrude</span></div>
<div class="b" style="left:1214.8px;top:321.0px;width:71.0px;height:19.0px;line-height:16.0px;color:#dcdcdc;font-size:11px;"><span style="position:absolute;left:50%;top:0;transform:translateX(-50%);white-space:nowrap">Edit Mesh</span></div>
<div class="b" style="left:1140.5px;top:344.0px;width:70.0px;height:19.0px;line-height:16.0px;color:#161616;font-size:11px;text-shadow:1px 1px 0 #525252;-webkit-text-stroke:0.35px #141414;overflow:hidden;"><span style="position:absolute;left:50%;top:0;transform:translateX(-50%);white-space:nowrap">Edit Spline</span></div>
<div class="b" style="left:1214.8px;top:344.0px;width:71.0px;height:19.0px;line-height:16.0px;color:#dcdcdc;font-size:11px;"><span style="position:absolute;left:50%;top:0;transform:translateX(-50%);white-space:nowrap">Edit Poly</span></div>
<div style="left:1134px;top:369.5px;width:160.5px;height:143px;background:#f2f2f2"></div>
<div style="left:1136px;top:371.5px;width:156.5px;height:139px;background:#585858"></div>
<div style="left:1136px;top:371.5px;width:156.5px;height:15px;background:#484848"></div>
<div style="left:1136px;top:386.5px;width:156.5px;height:1px;background:#6a6a6a"></div>
<svg style="left:1141px;top:373.5px" width="10" height="10"><rect width="10" height="10" fill="#0a0a0a"/><path d="M2.5 5 H7.5 M5 2.5 V7.5" stroke="#888" stroke-width="1"/></svg>
<span class="t" style="left:1156.5px;top:372.0px;color:#f0f0f0;font-size:11px;">Editable Poly</span>
<svg style="left:1134px;top:516px" width="164" height="24" viewBox="1134 516 164 24"><path d="M1164.4 520 V536 M1200 520 V536 M1259.6 520 V536" stroke="#1c1c1c" stroke-width="1.3"/><path d="M1138 528 H1144" stroke="#e0e0e0" stroke-width="1.2"/><path d="M1144 524.5 V531.5 L1146 530 H1151 L1153 531.5 V524.5 L1151 526 H1146 Z" fill="#e8e8e8" stroke="#111" stroke-width="0.6"/><path d="M1178.6 522.5 H1184 M1179.6 523 V533.5 H1183 V523" fill="#f0f0f0" stroke="#f0f0f0" stroke-width="1"/><rect x="1180.4" y="525" width="1.6" height="8" fill="#666"/><path d="M1211 522 L1217 534 L1224 522 M1214 528 L1220.5 532.5 M1221 528 L1214.5 532.5" stroke="#e4e4e4" stroke-width="1.1" fill="none"/><path d="M1237 527 C1237 523.5 1239.5 522.5 1241 522.5 C1243 522.5 1245.5 524 1245.5 527 V531.5 C1245.5 533.5 1244 534.5 1241.3 534.5 C1238.6 534.5 1237 533.5 1237 531.5 Z" fill="none" stroke="#e4e4e4" stroke-width="1.2"/><path d="M1239.5 526 V530 M1241.4 525.4 V530 M1243.3 526 V530" stroke="#e4e4e4" stroke-width="0.9"/><rect x="1269.5" y="521" width="13" height="12" fill="#f4f4f4" stroke="#2030b0" stroke-width="1.4"/><rect x="1269.5" y="521" width="13" height="2.6" fill="#2030b0"/><rect x="1272" y="526" width="5" height="4" fill="#666"/><rect x="1278" y="527" width="6" height="2" fill="#333"/><rect x="1274" y="531.5" width="9" height="3" fill="#ddd" stroke="#333" stroke-width="0.6"/></svg>
<div style="left:1127px;top:550.2px;width:174.5px;height:2.6px;background:#0e0e0e"></div>
<div style="left:1299.5px;top:549.2px;width:2px;height:2px;background:#0e0e0e"></div>
<div style="left:1127px;top:560px;width:172px;height:1.2px;background:#262626"></div>
<div style="left:1298.2px;top:560px;width:1.2px;height:322px;background:#3a3a3a"></div>
<div style="left:1299.4px;top:560px;width:1px;height:322px;background:#4c4c4c"></div>
<div class="rb" style="left:1131.5px;top:573px;width:163.5px;height:222.5px;"></div>
<div class="h" style="left:1135px;top:565.5px;width:156.5px;height:15.5px;line-height:13.5px;"><i style="position:absolute;left:3.4px;top:6.0px;width:4.5px;height:1.4px;background:#e4e4e4"></i>Selection</div>
<svg style="left:1150px;top:585px" width="125" height="22" viewBox="1150 585 125 22"><g fill="#ee1010"><rect x="1166.5" y="588.5" width="2.8" height="2.8"/><rect x="1155.8" y="594.8" width="2.8" height="2.8"/><rect x="1161.8" y="598.8" width="2.8" height="2.8"/><rect x="1163.6" y="593.6" width="1.2" height="1.2" opacity="0.7"/></g><path d="M1180 598 L1193.5 590 L1190 601.5 Z" fill="none" stroke="#ee1010" stroke-width="1.2"/><path d="M1206 589 C1202.5 590 1202.5 598 1205.5 601.5 C1207.5 603 1209 600 1208.5 598 C1212 597 1213.5 592 1210.5 589.5 C1209 588.4 1207.4 588.6 1206 589 Z" fill="none" stroke="#ee1010" stroke-width="1.1"/><rect x="1228.3" y="589.8" width="11" height="11" fill="#ff0000" stroke="#700" stroke-width="0.6"/><path d="M1251.5 593 L1255 589.6 L1264 589.6 L1264 597.4 L1260.5 601.2 L1251.5 601.2 Z" fill="#e80000" stroke="#600" stroke-width="0.5"/><path d="M1260.5 593 L1264 589.6 L1264 597.4 L1260.5 601.2 Z" fill="#8020a0"/><path d="M1251.5 593 H1260.5 V601.2" stroke="#500" stroke-width="0.6" fill="none"/></svg>
<div class="c" style="left:1142.2px;top:614.2px;width:11px;height:11px;"></div>
<span class="t" style="left:1159px;top:612.7px;color:#161616;font-size:11px;text-shadow:1px 1px 0 #525252;-webkit-text-stroke:0.35px #141414;">By Vertex</span>
<div class="c" style="left:1142.2px;top:633.0px;width:11px;height:11px;"></div>
<span class="t" style="left:1159px;top:631.5px;color:#161616;font-size:11px;text-shadow:1px 1px 0 #525252;-webkit-text-stroke:0.35px #141414;">Ignore Backfacing</span>
<div class="c" style="left:1142.2px;top:653.0px;width:11px;height:11px;"></div>
<span class="t" style="left:1159px;top:651.5px;color:#161616;font-size:11px;text-shadow:1px 1px 0 #525252;-webkit-text-stroke:0.35px #141414;">By Angle:</span>
<div class="f" style="left:1208.3px;top:651px;width:66.2px;height:14.8px;line-height:9.8px;color:#1a1a1a;background:#525252;-webkit-text-stroke:0.3px #1a1a1a;">45,0</div>
<div class="sp" style="left:1276.5px;top:651.5px;width:10.5px;height:14.0px;"><svg width="10.5" height="14.0" style="position:absolute;left:0;top:0"><path d="M2.25 5.0 L5.25 1.5 L8.25 5.0 Z M2.25 9.0 L5.25 12.5 L8.25 9.0 Z" fill="#e6e6e6"/></svg></div>
<div class="b" style="left:1141.4px;top:670.2px;width:70.2px;height:16.4px;line-height:13.4px;color:#161616;font-size:11px;text-shadow:1px 1px 0 #525252;-webkit-text-stroke:0.35px #141414;"><span style="position:absolute;left:50%;top:0;transform:translateX(-50%);white-space:nowrap">Shrink</span></div>
<div class="b" style="left:1218.5px;top:670.2px;width:70.8px;height:16.4px;line-height:13.4px;color:#161616;font-size:11px;text-shadow:1px 1px 0 #525252;-webkit-text-stroke:0.35px #141414;"><span style="position:absolute;left:50%;top:0;transform:translateX(-50%);white-space:nowrap">Grow</span></div>
<div class="b" style="left:1141.4px;top:691.8px;width:55.6px;height:16.2px;line-height:13.2px;color:#161616;font-size:11px;text-shadow:1px 1px 0 #525252;-webkit-text-stroke:0.35px #141414;"><span style="position:absolute;left:50%;top:0;transform:translateX(-50%);white-space:nowrap">Ring</span></div>
<div class="sp" style="left:1201px;top:692.5px;width:10.5px;height:15.0px;"><svg width="10.5" height="15.0" style="position:absolute;left:0;top:0"><path d="M2.25 5.5 L5.25 2.0 L8.25 5.5 Z M2.25 9.5 L5.25 13.0 L8.25 9.5 Z" fill="#e6e6e6"/></svg></div>
<div class="b" style="left:1218.5px;top:691.8px;width:57.8px;height:16.2px;line-height:13.2px;color:#161616;font-size:11px;text-shadow:1px 1px 0 #525252;-webkit-text-stroke:0.35px #141414;"><span style="position:absolute;left:50%;top:0;transform:translateX(-50%);white-space:nowrap">Loop</span></div>
<div class="sp" style="left:1278.5px;top:692.5px;width:10.5px;height:15.0px;"><svg width="10.5" height="15.0" style="position:absolute;left:0;top:0"><path d="M2.25 5.5 L5.25 2.0 L8.25 5.5 Z M2.25 9.5 L5.25 13.0 L8.25 9.5 Z" fill="#e6e6e6"/></svg></div>
<div class="g" style="left:1133.3px;top:719.8px;width:157.4px;height:31.2px;"></div>
<span class="t" style="left:1139px;top:716.8px;height:8px;line-height:7px;color:#dcdcdc;font-size:11px;background:#444;padding:0 2px;">Preview Selection</span>
<div class="r" style="left:1136.2px;top:732.2px;"><i style="position:absolute;left:1.7px;top:1.7px;width:4.6px;height:4.6px;border-radius:3px;background:#ececec"></i></div>
<span class="t" style="left:1152px;top:730.6px;color:#dcdcdc;font-size:11px;">Off</span>
<div class="r" style="left:1184.2px;top:732.2px;"></div>
<span class="t" style="left:1200.5px;top:730.6px;color:#161616;font-size:11px;text-shadow:1px 1px 0 #525252;-webkit-text-stroke:0.35px #141414;">SubObj</span>
<div class="r" style="left:1245.8px;top:732.2px;"></div>
<span class="t" style="left:1262px;top:730.6px;color:#161616;font-size:11px;text-shadow:1px 1px 0 #525252;-webkit-text-stroke:0.35px #141414;">Multi</span>
<span class="t" style="left:1175px;top:758.4px;color:#d0d0d0;font-size:11px;">Whole Object Selected</span>
<div style="left:1131.5px;top:806px;width:3px;height:10px;border:1px solid #222;border-right:none;box-sizing:border-box"></div>
<div style="left:1292px;top:806px;width:3px;height:10px;border:1px solid #222;border-left:none;box-sizing:border-box"></div>
<div class="h" style="left:1135px;top:803.5px;width:156.5px;height:15.0px;line-height:13.0px;"><i style="position:absolute;left:3.4px;top:5.8px;width:4.5px;height:1.4px;background:#e4e4e4"></i><i style="position:absolute;left:4.95px;top:4.2px;width:1.4px;height:4.6px;background:#e4e4e4"></i>Soft Selection</div>
<div style="left:1308.5px;top:75px;width:173px;height:812px;border-left:1.5px solid #1a1a1a;border-top:1.5px solid #1a1a1a;box-sizing:border-box"></div>
<div style="left:1477.2px;top:77px;width:4.2px;height:806px;background:#0c0c0c"></div>
<div style="left:1478px;top:803px;width:2.6px;height:80px;background:#e8e8e8"></div>
<svg style="left:1474px;top:432px" width="4" height="14"><g fill="#888"><rect x="1" y="1" width="1.4" height="1.4"/><rect x="1" y="4" width="1.4" height="1.4"/><rect x="1" y="7" width="1.4" height="1.4"/><rect x="1" y="10" width="1.4" height="1.4"/></g></svg>
<div class="rb" style="left:1311.5px;top:90px;width:163px;height:448.5px;"></div>
<div class="h" style="left:1315.5px;top:82.2px;width:156.8px;height:15.4px;line-height:13.4px;"><i style="position:absolute;left:3.4px;top:6.0px;width:4.5px;height:1.4px;background:#e4e4e4"></i>Edit Geometry</div>
<div class="b" style="left:1319.3px;top:103.6px;width:147.7px;height:17.0px;line-height:14.0px;color:#dcdcdc;font-size:11px;"><span style="position:absolute;left:50%;top:0;transform:translateX(-50%);white-space:nowrap">Repeat Last</span></div>
<div class="g" style="left:1318.4px;top:128.3px;width:150.6px;height:47.0px;"></div>
<span class="t" style="left:1325px;top:125.3px;height:8px;line-height:7px;color:#dcdcdc;font-size:11px;background:#444;padding:0 2px;">Constraints</span>
<div class="r" style="left:1328.0px;top:139.3px;"><i style="position:absolute;left:1.7px;top:1.7px;width:4.6px;height:4.6px;border-radius:3px;background:#ececec"></i></div>
<span class="t" style="left:1344.8px;top:137.8px;color:#dcdcdc;font-size:11px;">None</span>
<div class="r" style="left:1387.6px;top:139.3px;"></div>
<span class="t" style="left:1403.8px;top:137.8px;color:#dcdcdc;font-size:11px;">Edge</span>
<div class="r" style="left:1328.0px;top:156.8px;"></div>
<span class="t" style="left:1344.8px;top:155.3px;color:#dcdcdc;font-size:11px;">Face</span>
<div class="r" style="left:1387.6px;top:156.8px;"></div>
<span class="t" style="left:1403.8px;top:155.3px;color:#dcdcdc;font-size:11px;">Normal</span>
<div class="c" style="left:1331px;top:185.5px;width:11px;height:11px;"></div>
<span class="t" style="left:1347.6px;top:184.3px;color:#dcdcdc;font-size:11px;">Preserve UVs</span>
<div class="b" style="left:1421px;top:183px;width:14.2px;height:16.6px;"><i style="position:absolute;left:1.5px;top:2.9px;border:1.2px solid #080808;border-top:3px solid #080808;box-sizing:border-box;width:10px;height:10px"></i></div>
<div class="b" style="left:1319.8px;top:204.6px;width:70.8px;height:17.2px;line-height:14.2px;color:#dcdcdc;font-size:11px;"><span style="position:absolute;left:50%;top:0;transform:translateX(-50%);white-space:nowrap">Create</span></div>
<div class="b" style="left:1396.2px;top:204.6px;width:70.8px;height:17.2px;line-height:14.2px;color:#161616;font-size:11px;text-shadow:1px 1px 0 #525252;-webkit-text-stroke:0.35px #141414;"><span style="position:absolute;left:50%;top:0;transform:translateX(-50%);white-space:nowrap">Collapse</span></div>
<div class="b" style="left:1319.8px;top:227.3px;width:55.5px;height:17.2px;line-height:14.2px;color:#dcdcdc;font-size:11px;"><span style="position:absolute;left:50%;top:0;transform:translateX(-50%);white-space:nowrap">Attach</span></div>
<div class="b" style="left:1376px;top:227.3px;width:14.6px;height:17.2px;"><i style="position:absolute;left:1.7px;top:3.2px;border:1.2px solid #080808;border-top:3px solid #080808;box-sizing:border-box;width:10px;height:10px"></i></div>
<div class="b" style="left:1396.2px;top:227.3px;width:70.8px;height:17.2px;line-height:14.2px;color:#161616;font-size:11px;text-shadow:1px 1px 0 #525252;-webkit-text-stroke:0.35px #141414;"><span style="position:absolute;left:50%;top:0;transform:translateX(-50%);white-space:nowrap">Detach</span></div>
<div class="g" style="left:1318.4px;top:249.5px;width:150.6px;height:71.0px;"></div>
<div class="b" style="left:1322.6px;top:255.4px;width:68.0px;height:17.0px;line-height:14.0px;color:#161616;font-size:11px;text-shadow:1px 1px 0 #525252;-webkit-text-stroke:0.35px #141414;"><span style="position:absolute;left:50%;top:0;transform:translateX(-50%);white-space:nowrap">Slice Plane</span></div>
<div class="c" style="left:1396.2px;top:257.7px;width:11px;height:11px;"></div>
<span class="t" style="left:1413px;top:256.6px;color:#dcdcdc;font-size:11px;">Split</span>
<div class="b" style="left:1322.6px;top:277.3px;width:68.0px;height:16.9px;line-height:13.9px;color:#161616;font-size:11px;text-shadow:1px 1px 0 #525252;-webkit-text-stroke:0.35px #141414;"><span style="position:absolute;left:50%;top:0;transform:translateX(-50%);white-space:nowrap">Slice</span></div>
<div class="b" style="left:1396.2px;top:277.3px;width:68.0px;height:16.9px;line-height:13.9px;color:#161616;font-size:11px;text-shadow:1px 1px 0 #525252;-webkit-text-stroke:0.35px #141414;"><span style="position:absolute;left:50%;top:0;transform:translateX(-50%);white-space:nowrap">Reset Plane</span></div>
<div class="b" style="left:1322.6px;top:299.7px;width:68.0px;height:17.2px;line-height:14.2px;color:#dcdcdc;font-size:11px;"><span style="position:absolute;left:50%;top:0;transform:translateX(-50%);white-space:nowrap">QuickSlice</span></div>
<div class="b" style="left:1396.2px;top:299.7px;width:68.0px;height:17.2px;line-height:14.2px;color:#dcdcdc;font-size:11px;"><span style="position:absolute;left:50%;top:0;transform:translateX(-50%);white-space:nowrap">Cut</span></div>
<div class="b" style="left:1319.8px;top:327.5px;width:55.5px;height:17.2px;line-height:14.2px;color:#dcdcdc;font-size:11px;"><span style="position:absolute;left:50%;top:0;transform:translateX(-50%);white-space:nowrap">MSmooth</span></div>
<div class="b" style="left:1376px;top:327.5px;width:14.6px;height:17.2px;"><i style="position:absolute;left:1.7px;top:3.2px;border:1.2px solid #080808;border-top:3px solid #080808;box-sizing:border-box;width:10px;height:10px"></i></div>
<div class="b" style="left:1396.2px;top:327.5px;width:55.0px;height:17.2px;line-height:14.2px;color:#dcdcdc;font-size:11px;"><span style="position:absolute;left:50%;top:0;transform:translateX(-50%);white-space:nowrap">Tessellate</span></div>
<div class="b" style="left:1452.2px;top:327.5px;width:14.8px;height:17.2px;"><i style="position:absolute;left:1.8px;top:3.2px;border:1.2px solid #080808;border-top:3px solid #080808;box-sizing:border-box;width:10px;height:10px"></i></div>
<div class="b" style="left:1319.8px;top:350.5px;width:84.7px;height:17.2px;line-height:14.2px;color:#dcdcdc;font-size:11px;"><span style="position:absolute;left:50%;top:0;transform:translateX(-50%);white-space:nowrap">Make Planar</span></div>
<div class="b" style="left:1408.6px;top:350.5px;width:16.7px;height:17.2px;line-height:14.2px;color:#dcdcdc;font-size:11px;"><span style="position:absolute;left:50%;top:0;transform:translateX(-50%);white-space:nowrap">X</span></div>
<div class="b" style="left:1429.5px;top:350.5px;width:16.1px;height:17.2px;line-height:14.2px;color:#dcdcdc;font-size:11px;"><span style="position:absolute;left:50%;top:0;transform:translateX(-50%);white-space:nowrap">Y</span></div>
<div class="b" style="left:1450.3px;top:350.5px;width:16.7px;height:17.2px;line-height:14.2px;color:#dcdcdc;font-size:11px;"><span style="position:absolute;left:50%;top:0;transform:translateX(-50%);white-space:nowrap">Z</span></div>
<div class="b" style="left:1319.8px;top:372.4px;width:70.8px;height:17.2px;line-height:14.2px;color:#dcdcdc;font-size:11px;"><span style="position:absolute;left:50%;top:0;transform:translateX(-50%);white-space:nowrap">View Align</span></div>
<div class="b" style="left:1396.2px;top:372.4px;width:70.8px;height:17.2px;line-height:14.2px;color:#dcdcdc;font-size:11px;"><span style="position:absolute;left:50%;top:0;transform:translateX(-50%);white-space:nowrap">Grid Align</span></div>
<div class="b" style="left:1357.3px;top:394.9px;width:55.5px;height:17.2px;line-height:14.2px;color:#dcdcdc;font-size:11px;"><span style="position:absolute;left:50%;top:0;transform:translateX(-50%);white-space:nowrap">Relax</span></div>
<div class="b" style="left:1413.6px;top:394.9px;width:14.6px;height:17.2px;"><i style="position:absolute;left:1.7px;top:3.2px;border:1.2px solid #080808;border-top:3px solid #080808;box-sizing:border-box;width:10px;height:10px"></i></div>
<div class="b" style="left:1319.8px;top:417.7px;width:70.8px;height:17.2px;line-height:14.2px;color:#161616;font-size:11px;text-shadow:1px 1px 0 #525252;-webkit-text-stroke:0.35px #141414;"><span style="position:absolute;left:50%;top:0;transform:translateX(-50%);white-space:nowrap">Hide Selected</span></div>
<div class="b" style="left:1396.2px;top:417.7px;width:70.8px;height:17.2px;line-height:14.2px;color:#161616;font-size:11px;text-shadow:1px 1px 0 #525252;-webkit-text-stroke:0.35px #141414;"><span style="position:absolute;left:50%;top:0;transform:translateX(-50%);white-space:nowrap">Unhide All</span></div>
<div class="b" style="left:1348.1px;top:440.4px;width:91.1px;height:17.0px;line-height:14.0px;color:#161616;font-size:11px;text-shadow:1px 1px 0 #525252;-webkit-text-stroke:0.35px #141414;"><span style="position:absolute;left:50%;top:0;transform:translateX(-50%);white-space:nowrap">Hide Unselected</span></div>
<span class="t" style="left:1321.8px;top:460.6px;color:#161616;font-size:11px;text-shadow:1px 1px 0 #525252;-webkit-text-stroke:0.35px #141414;">Named Selections:</span>
<div class="b" style="left:1319.8px;top:477.3px;width:70.8px;height:17.2px;line-height:14.2px;color:#161616;font-size:11px;text-shadow:1px 1px 0 #525252;-webkit-text-stroke:0.35px #141414;"><span style="position:absolute;left:50%;top:0;transform:translateX(-50%);white-space:nowrap">Copy</span></div>
<div class="b" style="left:1396.2px;top:477.3px;width:70.8px;height:17.2px;line-height:14.2px;color:#161616;font-size:11px;text-shadow:1px 1px 0 #525252;-webkit-text-stroke:0.35px #141414;"><span style="position:absolute;left:50%;top:0;transform:translateX(-50%);white-space:nowrap">Paste</span></div>
<div class="c" style="left:1322.6px;top:500.0px;width:11px;height:11px;"><svg width="11" height="11" viewBox="0 0 11 11" style="position:absolute;left:0;top:0"><path d="M2.2 5.2 L4.4 7.6 L8.6 2.4" stroke="#f0f0f0" stroke-width="1.7" fill="none"/></svg></div>
<span class="t" style="left:1339.4px;top:498.7px;color:#161616;font-size:11px;text-shadow:1px 1px 0 #525252;-webkit-text-stroke:0.35px #141414;">Delete Isolated Vertices</span>
<div class="c" style="left:1346.4px;top:520.8px;width:11px;height:11px;"><svg width="11" height="11" viewBox="0 0 11 11" style="position:absolute;left:0;top:0"><path d="M2.2 5.2 L4.4 7.6 L8.6 2.4" stroke="#f0f0f0" stroke-width="1.7" fill="none"/></svg></div>
<span class="t" style="left:1363.4px;top:519.5px;color:#dcdcdc;font-size:11px;">Full Interactivity</span>
<div class="rb" style="left:1311.5px;top:554px;width:163px;height:340px;border-bottom:none"></div>
<div class="h" style="left:1315.5px;top:546.8px;width:156.8px;height:15.0px;line-height:13.0px;"><i style="position:absolute;left:3.4px;top:5.8px;width:4.5px;height:1.4px;background:#e4e4e4"></i>Subdivision Surface</div>
<div class="c" style="left:1324.6px;top:571.2px;width:11px;height:11px;"><svg width="11" height="11" viewBox="0 0 11 11" style="position:absolute;left:0;top:0"><path d="M2.2 5.2 L4.4 7.6 L8.6 2.4" stroke="#f0f0f0" stroke-width="1.7" fill="none"/></svg></div>
<span class="t" style="left:1341.5px;top:569.9px;color:#dcdcdc;font-size:11px;">Smooth Result</span>
<div class="c" style="left:1324.6px;top:592.0px;width:11px;height:11px;"></div>
<span class="t" style="left:1341.5px;top:590.7px;color:#dcdcdc;font-size:11px;">Use NURMS Subdivision</span>
<div class="c" style="left:1324.6px;top:611.2px;width:11px;height:11px;"><svg width="11" height="11" viewBox="0 0 11 11" style="position:absolute;left:0;top:0"><path d="M2.2 5.2 L4.4 7.6 L8.6 2.4" stroke="#f0f0f0" stroke-width="1.7" fill="none"/></svg></div>
<span class="t" style="left:1341.5px;top:609.9px;color:#dcdcdc;font-size:11px;">Isoline Display</span>
<div class="c" style="left:1324.6px;top:630.9px;width:11px;height:11px;"><svg width="11" height="11" viewBox="0 0 11 11" style="position:absolute;left:0;top:0"><path d="M2.2 5.2 L4.4 7.6 L8.6 2.4" stroke="#f0f0f0" stroke-width="1.7" fill="none"/></svg></div>
<span class="t" style="left:1341.5px;top:629.6px;color:#dcdcdc;font-size:11px;">Show Cage......</span>
<div style="left:1422.5px;top:628.8px;width:16px;height:16px;background:#ffc20e;border:1.5px solid #111;box-sizing:border-box"></div>
<div style="left:1444.3px;top:628.8px;width:16.4px;height:16px;background:#e6e68c;border:1.5px solid #111;box-sizing:border-box"></div>
<div class="g" style="left:1318.4px;top:653px;width:150.6px;height:48px;"></div>
<span class="t" style="left:1325px;top:650px;height:8px;line-height:7px;color:#dcdcdc;font-size:11px;background:#444;padding:0 2px;">Display</span>
<span class="t" style="left:1311.8px;top:659.8px;width:90px;text-align:right;color:#dcdcdc;font-size:11px;letter-spacing:0.2px;">Iterations:</span>
<div class="f" style="left:1406.4px;top:659.8px;width:43.2px;height:14.8px;line-height:9.8px;color:#dcdcdc;background:#555;">1</div>
<div class="sp" style="left:1452.6px;top:659.8px;width:11.2px;height:15.0px;"><svg width="11.2" height="15.0" style="position:absolute;left:0;top:0"><path d="M2.5999999999999996 5.5 L5.6 2.0 L8.6 5.5 Z M2.5999999999999996 9.5 L5.6 13.0 L8.6 9.5 Z" fill="#e6e6e6"/></svg></div>
<span class="t" style="left:1311.8px;top:680.2px;width:90px;text-align:right;color:#dcdcdc;font-size:11px;">Smoothness:</span>
<div class="f" style="left:1406.4px;top:680.6px;width:43.2px;height:14.8px;line-height:9.8px;color:#dcdcdc;background:#555;">1,0</div>
<div class="sp" style="left:1452.6px;top:680.6px;width:11.2px;height:15.0px;"><svg width="11.2" height="15.0" style="position:absolute;left:0;top:0"><path d="M2.5999999999999996 5.5 L5.6 2.0 L8.6 5.5 Z M2.5999999999999996 9.5 L5.6 13.0 L8.6 9.5 Z" fill="#e6e6e6"/></svg></div>
<div class="g" style="left:1318.4px;top:707.4px;width:150.6px;height:49.2px;"></div>
<span class="t" style="left:1325px;top:704.4px;height:8px;line-height:7px;color:#dcdcdc;font-size:11px;background:#444;padding:0 2px;">Render</span>
<div class="c" style="left:1324.6px;top:716.1px;width:11px;height:11px;"></div>
<span class="t" style="left:1311.8px;top:714.8px;width:90px;text-align:right;color:#dcdcdc;font-size:11px;letter-spacing:0.2px;">Iterations:</span>
<div class="f" style="left:1406.4px;top:714.8px;width:43.2px;height:14.8px;line-height:9.8px;color:#1a1a1a;background:#525252;-webkit-text-stroke:0.3px #1a1a1a;">0</div>
<div class="sp" style="left:1452.6px;top:714.8px;width:11.2px;height:15.0px;"><svg width="11.2" height="15.0" style="position:absolute;left:0;top:0"><path d="M2.5999999999999996 5.5 L5.6 2.0 L8.6 5.5 Z M2.5999999999999996 9.5 L5.6 13.0 L8.6 9.5 Z" fill="#e6e6e6"/></svg></div>
<div class="c" style="left:1324.6px;top:736.3px;width:11px;height:11px;"></div>
<span class="t" style="left:1311.8px;top:735.0px;width:90px;text-align:right;color:#dcdcdc;font-size:11px;">Smoothness:</span>
<div class="f" style="left:1406.4px;top:735.6px;width:43.2px;height:14.6px;line-height:9.6px;color:#1a1a1a;background:#525252;-webkit-text-stroke:0.3px #1a1a1a;">1,0</div>
<div class="sp" style="left:1452.6px;top:735.6px;width:11.2px;height:14.8px;"><svg width="11.2" height="14.8" style="position:absolute;left:0;top:0"><path d="M2.5999999999999996 5.4 L5.6 1.9000000000000004 L8.6 5.4 Z M2.5999999999999996 9.4 L5.6 12.9 L8.6 9.4 Z" fill="#e6e6e6"/></svg></div>
<div class="g" style="left:1318.4px;top:764.3px;width:150.6px;height:46.7px;"></div>
<span class="t" style="left:1325px;top:761.3px;height:8px;line-height:7px;color:#dcdcdc;font-size:11px;background:#444;padding:0 2px;">Separate By</span>
<div class="c" style="left:1324.6px;top:775.8px;width:11px;height:11px;"></div>
<span class="t" style="left:1341.5px;top:774.5px;color:#dcdcdc;font-size:11px;">Smoothing Groups</span>
<div class="c" style="left:1324.6px;top:793.7px;width:11px;height:11px;"></div>
<span class="t" style="left:1341.5px;top:792.4px;color:#dcdcdc;font-size:11px;">Materials</span>
<div class="g" style="left:1318.4px;top:818.9px;width:150.6px;height:76.1px;"></div>
<span class="t" style="left:1325px;top:815.9px;height:8px;line-height:7px;color:#dcdcdc;font-size:11px;background:#444;padding:0 2px;">Update Options</span>
<div class="r" style="left:1325.0px;top:827.2px;"><i style="position:absolute;left:1.7px;top:1.7px;width:4.6px;height:4.6px;border-radius:3px;background:#ececec"></i></div>
<span class="t" style="left:1342px;top:825.6px;color:#dcdcdc;font-size:11px;">Always</span>
<div class="r" style="left:1325.0px;top:843.3px;"></div>
<span class="t" style="left:1342px;top:841.7px;color:#dcdcdc;font-size:11px;">When Rendering</span>
<div class="r" style="left:1325.0px;top:858.8px;"></div>
<span class="t" style="left:1342px;top:857.3px;color:#dcdcdc;font-size:11px;">Manually</span>
<div style="left:1345px;top:878.5px;width:96px;height:1px;background:#262626"></div>
<div style="left:1440px;top:878.5px;width:1px;height:5px;background:#262626"></div>
<div style="left:1123px;top:882.5px;width:365px;height:5px;background:#444"></div>
<div style="left:1127px;top:886.5px;width:361px;height:1.6px;background:#1c1c1c"></div>
<div style="left:1123px;top:888.1px;width:365px;height:49px;background:#444"></div>
<div class="b" style="left:1098.6px;top:893.2px;width:47.0px;height:19.4px;line-height:16.4px;color:#dcdcdc;font-size:11px;"><span style="position:absolute;left:50%;top:0;transform:translateX(-50%);white-space:nowrap">Auto Key</span></div>
<div class="b" style="left:1098.6px;top:914.6px;width:47.0px;height:19.8px;line-height:16.8px;color:#dcdcdc;font-size:11px;"><span style="position:absolute;left:50%;top:0;transform:translateX(-50%);white-space:nowrap">Set Key</span></div>
<div style="left:1149.5px;top:892.5px;width:113px;height:18.5px;background:#fff;border:1.5px solid #111;box-sizing:border-box;color:#000;font-size:11px;line-height:15px;padding-left:2px">Selected</div>
<svg style="left:1248px;top:896px" width="12" height="12"><path d="M2 3.6 L5.8 8 L9.6 3.6" stroke="#333" stroke-width="1.5" fill="none"/></svg>
<svg style="left:1151px;top:915px" width="22" height="20" viewBox="0 0 22 20"><path d="M2 14 C4.5 14 5.5 3.5 8.5 3.5 C11.5 3.5 11.5 15.5 14.5 15.5 C16.5 15.5 17 9 18 5.5" fill="none" stroke="#e02828" stroke-width="1.5"/><path d="M2 17 L10 1.5 L16.5 17" fill="none" stroke="#6a6ad8" stroke-width="0.7" stroke-dasharray="1.4 1.2"/><path d="M18.5 19 L21 19 L21 16.5 Z" fill="#eee"/></svg>
<div class="b" style="left:1175px;top:914.5px;width:88.5px;height:19.5px;line-height:16.5px;color:#dcdcdc;font-size:11px;"><span style="position:absolute;left:50%;top:0;transform:translateX(-50%);white-space:nowrap">Key Filters...</span></div>
<svg style="left:1268px;top:890px" width="220" height="47" viewBox="1268 890 220 47"><g fill="#dedede" stroke="#dedede" stroke-width="0.4"><rect x="1272" y="896.5" width="1.8" height="10.5"/><path d="M1280.5 897 L1274.5 901.8 L1280.5 906.6 Z M1287.5 897 L1281.5 901.8 L1287.5 906.6 Z" fill="none" stroke-width="1.2"/><path d="M1304.5 897 L1298.5 901.8 L1304.5 906.6 Z" fill="none" stroke-width="1.2"/><rect x="1306.3" y="897" width="2.2" height="9.6"/><rect x="1310.2" y="897" width="2.2" height="9.6"/><path d="M1323.6 896.5 L1332.6 901.8 L1323.6 907.1 Z" fill="none" stroke-width="1.3"/><path d="M1333 909.5 L1336 909.5 L1336 906.5 Z"/><rect x="1343" y="897" width="2.2" height="9.6"/><rect x="1346.9" y="897" width="2.2" height="9.6"/><path d="M1351.5 897 L1357.8 901.8 L1351.5 906.6 Z" fill="none" stroke-width="1.2"/><path d="M1369 897 L1375 901.8 L1369 906.6 Z M1376 897 L1382 901.8 L1376 906.6 Z" fill="none" stroke-width="1.2"/><rect x="1383" y="896.5" width="1.8" height="10.5"/><rect x="1271.6" y="918.8" width="1.6" height="10"/><path d="M1279 919.4 L1274 923.8 L1279 928.2 Z M1281 919.4 L1286 923.8 L1281 928.2 Z" fill="none" stroke-width="1.1"/><rect x="1287" y="918.8" width="1.6" height="10"/></g><path d="M1292.5 894 V910 M1363.3 894 V910 M1370.8 917 V933" stroke="#222" stroke-width="1.2"/><circle cx="1401" cy="900.5" r="4.4" fill="#cfe0f0" stroke="#e8e8e8" stroke-width="1.5"/><path d="M1404.4 904 L1409 909" stroke="#d0d0d0" stroke-width="2.4"/><path d="M1406 896.5 H1411 M1408.5 894 V899 M1406 901 H1411" stroke="#eee" stroke-width="1.1"/><g fill="#e6e6e6"><rect x="1419.6" y="895.5" width="5.2" height="5"/><rect x="1426.2" y="895.5" width="5.2" height="5"/><rect x="1419.6" y="902" width="5.2" height="5"/></g><circle cx="1428.6" cy="905" r="2.8" fill="#444" stroke="#e6e6e6" stroke-width="1.2"/><path d="M1430.6 907 L1433.6 910" stroke="#e6e6e6" stroke-width="1.5"/><path d="M1441 898 V894.6 H1444.5 M1453 894.6 H1456.5 V898 M1441 905 V908.6 H1444.5 M1453 908.6 H1456.5 V905" fill="none" stroke="#f0f0f0" stroke-width="1.4"/><path d="M1445 899.5 L1447.5 897.5 H1453 V903.5 L1450.5 905.6 H1445 Z" fill="#6ab050" stroke="#2a5a20" stroke-width="0.6"/><path d="M1456 910.5 L1458.5 910.5 L1458.5 908 Z" fill="#eee"/><g fill="#e6e6e6"><rect x="1469" y="894.6" width="4.6" height="4.6"/><rect x="1474.6" y="894.6" width="4.6" height="4.6"/><rect x="1474.6" y="900.2" width="4.6" height="4.6"/></g><path d="M1465 902.5 L1467.5 900.5 H1473 V906.5 L1470.5 908.6 H1465 Z" fill="#6ab050" stroke="#2a5a20" stroke-width="0.6"/><path d="M1478 910.5 L1480.5 910.5 L1480.5 908 Z" fill="#eee"/><rect x="1376.6" y="917.6" width="9.6" height="13.6" fill="#e8e8e8"/><rect x="1378" y="919" width="3" height="3" fill="#2a50b0"/><rect x="1382" y="919" width="3" height="3" fill="#2a50b0"/><rect x="1378" y="924.6" width="3" height="3" fill="#666"/><circle cx="1386.6" cy="928.4" r="3.6" fill="#f4f4f4" stroke="#333" stroke-width="0.8"/><path d="M1386.6 926.4 V928.6 H1388.4" stroke="#222" stroke-width="0.8" fill="none"/><path d="M1409.5 919 L1396.5 924.8 L1409.5 930.6" fill="none" stroke="#e4e4e4" stroke-width="1.3"/><path d="M1403 921.5 C1405 923.5 1405 926.5 1403 928.5" fill="none" stroke="#e4e4e4" stroke-width="1"/><path d="M1409 933 L1411.5 933 L1411.5 930.5 Z" fill="#eee"/><g fill="#ececec"><ellipse cx="1423.4" cy="922.4" rx="2" ry="4"/><circle cx="1423.6" cy="929.2" r="1.6"/><ellipse cx="1429.4" cy="922.4" rx="2" ry="4"/><circle cx="1429.2" cy="929.2" r="1.6"/></g><path d="M1432 933 L1434.5 933 L1434.5 930.5 Z" fill="#eee"/><ellipse cx="1448.4" cy="926" rx="7" ry="3.6" fill="none" stroke="#e4e4e4" stroke-width="1" stroke-dasharray="2 1.2"/><path d="M1444.6 927 L1448.6 920.5 L1452.4 927 Z" fill="#6ab050" stroke="#e8e8e8" stroke-width="0.8"/><path d="M1455.5 933 L1458 933 L1458 930.5 Z" fill="#eee"/><rect x="1464.6" y="917.6" width="11" height="11" fill="#f2f2f2" stroke="#222" stroke-width="1"/><path d="M1467 920 L1472.6 925.6 M1467 920 V923.4 M1467 920 H1470.4" stroke="#111" stroke-width="1.2" fill="none"/><path d="M1477.6 921 V930.6 H1468" fill="none" stroke="#c8c8c8" stroke-width="1"/></svg>
<div class="f" style="left:1296px;top:915.4px;width:61.6px;height:18.2px;line-height:15.6px;color:#b8b8b8;background:#555;">0</div>
<div class="sp" style="left:1358.6px;top:916px;width:9.4px;height:17px;"><svg width="9.4" height="17" style="position:absolute;left:0;top:0"><path d="M1.7000000000000002 6.5 L4.7 3.0 L7.7 6.5 Z M1.7000000000000002 10.5 L4.7 14.0 L7.7 10.5 Z" fill="#e6e6e6"/></svg></div>
</div></body></html>
